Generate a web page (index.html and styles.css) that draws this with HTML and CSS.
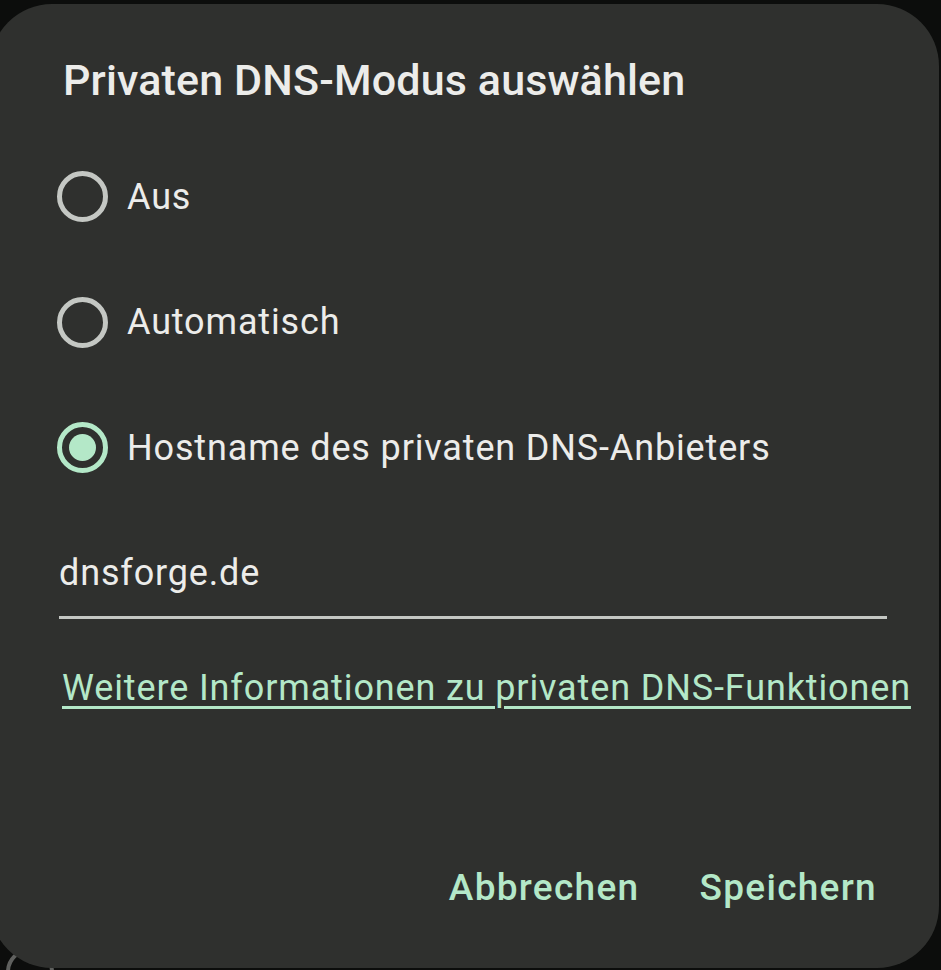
FILE: index.html
```html
<!DOCTYPE html>
<html lang="de">
<head>
    <meta charset="UTF-8">
    <meta name="viewport" content="width=device-width, initial-scale=1.0">
    <title>Privaten DNS-Modus auswählen</title>
    <link rel="stylesheet" href="styles.css">
</head>
<body>
    <svg class="behind-icon" width="60" height="30" viewBox="0 0 60 30">
        <circle cx="30" cy="32" r="22" fill="none" stroke="#5f605e" stroke-width="4"/>
        <line x1="30" y1="8" x2="30" y2="20" stroke="#0c0c0c" stroke-width="4"/>
    </svg>

    <div class="dialog">
        <h1 class="title">Privaten DNS-Modus auswählen</h1>

        <div class="options">
            <label class="option">
                <span class="radio"></span>
                <span>Aus</span>
            </label>
            <label class="option">
                <span class="radio"></span>
                <span>Automatisch</span>
            </label>
            <label class="option">
                <span class="radio checked"></span>
                <span>Hostname des privaten DNS-Anbieters</span>
            </label>
        </div>

        <div class="hostname">dnsforge.de</div>

        <a class="more-info" href="#">Weitere Informationen zu privaten DNS-Funktionen</a>

        <div class="actions">
            <button class="btn">Abbrechen</button>
            <button class="btn">Speichern</button>
        </div>
    </div>
</body>
</html>
```

FILE: styles.css
```css
html, body {
    margin: 0;
    height: 100%;
}
body {
    background-color: #0c0d0c;
    font-family: Roboto, "Noto Sans", sans-serif;
    overflow: hidden;
    position: relative;
}
.behind-icon {
    position: absolute;
    left: 0;
    bottom: 0;
}
.dialog {
    position: relative;
    box-sizing: border-box;
    width: 949px;
    height: 964px;
    margin: 4px 0 0 -10px;
    padding: 46px 0 0 73px;
    background-color: #2f302e;
    border-radius: 62px;
    display: flex;
    flex-direction: column;
}
.title {
    margin: 0;
    font-size: 43px;
    font-weight: 500;
    letter-spacing: 0.15px;
    color: #ececea;
    line-height: 60px;
}
.options {
    display: flex;
    flex-direction: column;
    margin-top: 61px;
}
.option {
    display: flex;
    align-items: center;
    gap: 19px;
    height: 51px;
    margin-bottom: 74.5px;
    font-size: 36px;
    letter-spacing: 0.85px;
    color: #ececea;
}
.radio {
    box-sizing: border-box;
    width: 51px;
    height: 51px;
    border: 5px solid #c4c7c3;
    border-radius: 50%;
    margin-left: -6px;
    flex-shrink: 0;
    display: flex;
    align-items: center;
    justify-content: center;
}
.radio.checked {
    border-color: #b4e8c8;
}
.radio.checked::after {
    content: "";
    width: 27px;
    height: 27px;
    border-radius: 50%;
    background-color: #b4e8c8;
}
.hostname {
    width: 828px;
    margin-top: 0;
    margin-left: -4px;
    padding-bottom: 18px;
    border-bottom: 3px solid #c4c7c3;
    font-size: 36px;
    letter-spacing: 0.85px;
    color: #ececea;
    line-height: 50px;
}
.more-info {
    align-self: flex-start;
    margin-top: 44px;
    margin-left: -1px;
    font-size: 36px;
    letter-spacing: 0.87px;
    color: #b4e8c8;
    text-decoration: underline;
    text-decoration-thickness: 3px;
    text-underline-offset: 6px;
    line-height: 50px;
}
.actions {
    margin-top: auto;
    margin-bottom: 55px;
    margin-right: 62px;
    display: flex;
    justify-content: flex-end;
    gap: 60px;
}
.btn {
    background: none;
    border: none;
    padding: 0;
    font-family: Roboto, "Noto Sans", sans-serif;
    font-size: 37px;
    font-weight: 500;
    letter-spacing: 1.3px;
    color: #b4e8c8;
    line-height: 50px;
    cursor: pointer;
}
```
